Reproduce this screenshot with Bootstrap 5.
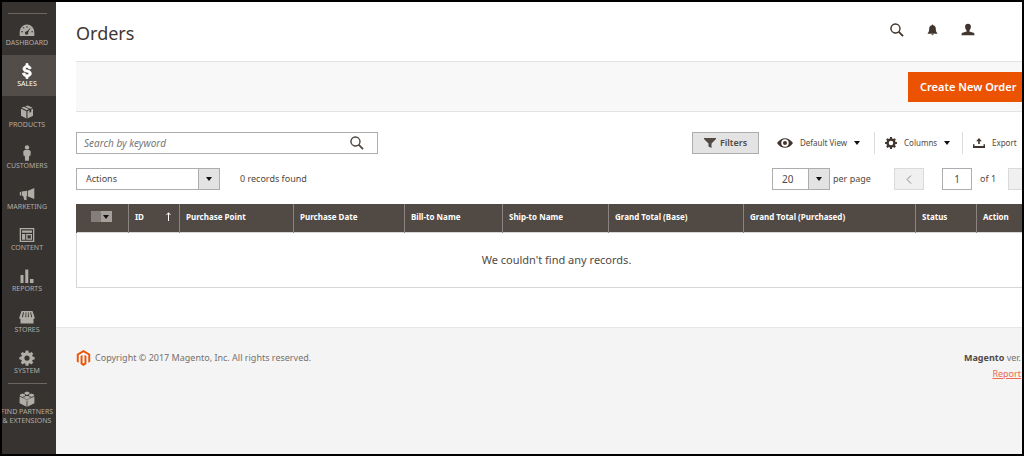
<!DOCTYPE html>
<html lang="en">
<head>
<meta charset="utf-8">
<meta name="viewport" content="width=device-width, initial-scale=1">
<title>Orders / Magento Admin</title>
<link href="https://cdn.jsdelivr.net/npm/bootstrap@5.3.0/dist/css/bootstrap.min.css" rel="stylesheet">
<style>
  body { font: 9px/16px "Noto Sans", "Open Sans", sans-serif; color: #514943; border: 2px solid #000; min-height: 100vh; overflow-x: hidden; }
  svg { display: block; fill: currentColor; flex: none; }
  button, input, select { font: inherit; color: inherit; border-radius: 0; }

  .side-menu { width: 54px; background: #373330; padding-top: 11px; flex: none; }
  .side-menu hr { margin: 0 9px 0 6px; border-color: #6d6661; opacity: 1; height: 1px; }
  .side-menu a { height: 41px; color: #b0aca6; font-size: 7px; line-height: 9px; text-decoration: none; white-space: nowrap; text-align: center; padding: 8px 4px 0 0; }
  .side-menu a svg { height: 16px; width: 16px; }
  .side-menu a.active { background: #524d49; color: #fff; }
  .side-menu a.partners { height: 70px; padding-top: 7px; }

  .content-col { min-width: 0; }
  .content-area { padding-left: 20px; }
  .page-head { height: 59px; padding-right: 47px; color: #41362f; }
  .page-head h1 { font-size: 18px; line-height: 24px; margin: 2px 0 0; }
  .head-icons { gap: 23px; margin-bottom: 4px; }
  .plain-btn { border: 0; background: none; padding: 0; }
  .action-bar { height: 51px; background: #f8f8f8; border: 1px solid #e3e3e3; border-width: 1px 0; }
  .btn-create { background: #eb5202; color: #fff; border: 0; width: 114px; height: 30px; font-size: 11px; font-weight: 600; padding: 0 6px 0 12px; white-space: nowrap; }

  .grid-tools { padding-top: 20px; }
  .search-box { width: 302px; height: 22px; border: 1px solid #adadad; padding: 0 13px 0 7px; }
  .search-box input { border: 0; outline: 0; padding: 0; background: none; min-width: 0; font-size: 10px; }
  .search-box input, .search-box input::placeholder { font-style: italic; color: #777; opacity: 1; }
  .btn-filters { width: 67px; height: 22px; background: #e3e3e3; border: 1px solid #adadad; font-weight: 600; padding: 0; }
  .tool { height: 22px; font-size: 8px; white-space: nowrap; padding-left: 10px; gap: 7px; }
  .tool svg { color: #41362f; }
  .tool + .tool { border-left: 1px solid #dcdcdc; }
  .tool-view { width: 115px; padding-left: 18px; }
  .tool-columns { width: 88px; }
  .tool-export { width: 60px; }
  .caret { width: 0; border: 3px solid transparent; border-top: 4px solid #111; border-bottom: 0; }

  .grid-row { padding-top: 14px; }
  .select-box { position: relative; height: 22px; }
  .select-box select { appearance: none; width: 100%; height: 100%; border: 1px solid #adadad; padding: 0 9px; background: linear-gradient(#adadad, #adadad) right 20px top / 1px 100% no-repeat, linear-gradient(#e3e3e3, #e3e3e3) right top / 20px 100% no-repeat #fff; }
  .select-box .caret { position: absolute; right: 8px; top: 9px; pointer-events: none; }
  .select-actions { width: 144px; }
  .select-size { width: 58px; }
  .size-label { width: 64px; padding-left: 3px; }
  .page-btn { height: 22px; width: 30px; border: 1px solid #dadada; background: #f0f0f0; color: #8a8580; padding: 0; }
  .page-btn.next { width: 14px; border-right: 0; }
  .page-field { width: 30px; height: 22px; border: 1px solid #adadad; text-align: center; padding: 0; margin-left: 18px; }
  .of-label { width: 36px; padding-left: 8px; }
  .select-size select, .page-field { font-size: 10px; }

  .orders { table-layout: fixed; width: 100%; margin: 14px 0 0; }
  .orders th { background: #514943; color: #fff; font-size: 8px; line-height: 12px; font-weight: 700; height: 28px; padding: 0 0 2px 6px; border-left: 1px solid #8a837f; white-space: nowrap; }
  .orders th:first-child { border-left-color: #514943; }
  .orders td { height: 55px; border: 1px solid #d6d6d6; border-right: 0; text-align: center; font-size: 11px; padding: 0 0 0 14px; }
  .mass-select { width: 21px; height: 11px; background: linear-gradient(90deg, #847d79 10px, #a5a09c 10px); border: 0; padding: 0 3px 0 0; }

  .page-foot { margin-top: 39px; background: #f4f4f4; border-top: 1px solid #e6e6e6; padding: 22px 1px 0 20px; color: #77716c; }
  .page-foot a { color: #ef6a4c; }
  .page-foot strong { color: #514943; font-weight: 700; }
</style>
</head>
<body class="d-flex">
<nav class="side-menu d-flex flex-column" aria-label="Main menu">
  <hr>
  <a href="#" class="d-flex flex-column align-items-center"><svg viewBox="0 0 16 16"><path fill-rule="evenodd" d="M8 2.500a7.300 7.300 0 0 0-7.300 7.300V14h14.600V9.800A7.300 7.300 0 0 0 8 2.500zM11.800 5.300 9.200 10.300a1.700 1.700 0 1 1-1.200-1zM2.200 9.200h1.800v1H2.200zM12.300 9.200h1.700v1h-1.700zM7.500 4h1v1.700h-1zM3.700 5.600l.7-.7 1.200 1.200-.7.7z"/></svg><span>DASHBOARD</span></a>
  <a href="#" class="active d-flex flex-column align-items-center"><svg viewBox="0 0 16 16"><path stroke="currentColor" stroke-width=".8" d="M7 .6h2v1.900c1.700.3 2.900 1.300 3.100 3L9.800 6C9.600 5 9 4.500 8 4.500S6.400 5 6.400 5.600c0 .8.800 1.100 2.200 1.500 2.300.6 3.700 1.500 3.700 3.500 0 1.700-1.200 2.800-3.300 3.100v1.800H7v-1.800c-2-.3-3.300-1.500-3.500-3.400L6 10c.2 1.200 1 1.800 2.100 1.800s1.800-.4 1.800-1.100c0-.8-.8-1.200-2.300-1.600C5.300 8.500 4 7.600 4 5.700c0-1.600 1.200-2.700 3-3z"/></svg><span>SALES</span></a>
  <a href="#" class="d-flex flex-column align-items-center"><svg viewBox="0 0 16 16"><path d="M7.600 1.500 2.500 3.800l5.300 2.400L10 5.100 4.900 2.700zM8.700 1.500l-2.500 1L11.300 4.700l2.300-1zM2 4.800l5.400 2.500v7.200L2 11.700zM14 4.800v6.900l-5.500 2.800V7.300l2-1v2.500l1.700-.8V5.600z"/></svg><span>PRODUCTS</span></a>
  <a href="#" class="d-flex flex-column align-items-center"><svg viewBox="0 0 16 16"><circle cx="8" cy="2.400" r="2.200"/><path d="M5.700 5h4.600l1.500 1.500-.3 4-1.300.4-.3 4.900H6.100l-.3-4.900-1.300-.4-.3-4z"/></svg><span>CUSTOMERS</span></a>
  <a href="#" class="d-flex flex-column align-items-center"><svg viewBox="0 0 16 16"><path d="M.8 6.300 2 5.800v4L.8 9.300zM2.700 5.600l5.500-.8v5.700l-1-.1.700 3.300-2.700.4-1-4-1.500-.3zM9 4.700 15.300 2v11L9 10.600z"/></svg><span>MARKETING</span></a>
  <a href="#" class="d-flex flex-column align-items-center"><svg viewBox="0 0 16 16"><path fill-rule="evenodd" d="M.7 1h14.600v14H.7zM2 2.300v11.400h12V2.300zM3 3.500h10v2.300H3zM3 7h3.200v5.700H3zM7.200 7H13v5.700H7.200zM8.500 8.200v3.200h3.300V8.200z"/></svg><span>CONTENT</span></a>
  <a href="#" class="d-flex flex-column align-items-center"><svg viewBox="0 0 16 16"><path d="M1.500 7h3v8h-3zM6.300 1.500h3V15h-3zM11 11h3.500v4H11z"/></svg><span>REPORTS</span></a>
  <a href="#" class="d-flex flex-column align-items-center"><svg viewBox="0 0 16 16"><path fill-rule="evenodd" d="M2.500 2h11L15.700 8.500c0 1-.7 1.500-1.200 1.500v4.500h-13V10C.8 10 .3 9.500.3 8.500zM4 3.200 2.900 8.300h1L5 3.200zM6.700 3.200 6.300 8.300h1V3.200zM8.900 3.200v5.100h1l-.4-5.100zM11.200 3.200l1 5.100h1L12 3.200z"/></svg><span>STORES</span></a>
  <a href="#" class="d-flex flex-column align-items-center"><svg viewBox="0 0 16 16"><path fill-rule="evenodd" d="M6.700.6h2.600l.4 2 1.100.5 1.700-1.200 1.800 1.800-1.200 1.700.5 1.100 2 .4v2.500l-2 .4-.5 1.100 1.200 1.700-1.800 1.800-1.700-1.200-1.100.5-.4 2H6.700l-.4-2-1.100-.5-1.700 1.200-1.800-1.800 1.200-1.700-.5-1.100-2-.4V6.900l2-.4.500-1.100-1.200-1.700 1.800-1.800 1.700 1.200 1.100-.5zM8 5.500a2.600 2.600 0 1 0 0 5.200 2.600 2.600 0 0 0 0-5.200z"/></svg><span>SYSTEM</span></a>
  <hr>
  <a href="#" class="partners d-flex flex-column align-items-center"><svg viewBox="0 0 16 16"><path d="M8 4.800 14.800 7.500 8 10.500 1.200 7.500z" opacity=".55"/><path d="M.6 5.500 7.600 9v6.700L.6 12.200zM15.400 5.500v6.700L8.400 15.700V9zM8 .4l2.500 1.100v1.300L8 4 5.500 2.800V1.500zM3.500 2.500 6 3.600v1.300L3.500 6 1 4.900V3.600zM12.500 2.500 15 3.600v1.300L12.500 6 10 4.900V3.600zM8 4.700l2.500 1.100v1.300L8 8.200 5.500 7.100V5.800z"/></svg><span>FIND PARTNERS<br>&amp; EXTENSIONS</span></a>
</nav>

<div class="content-col d-flex flex-column flex-grow-1">
  <div class="content-area">
    <header class="page-head d-flex align-items-center justify-content-between">
      <h1 class="fw-normal">Orders</h1>
      <div class="head-icons d-flex align-items-center">
        <button class="plain-btn" aria-label="Search"><svg width="14" height="14" viewBox="0 0 14 14"><path fill-rule="evenodd" d="M5.500.3a5.200 5.200 0 1 0 3 9.400l3.800 4 1.400-1.300-4-3.900A5.200 5.200 0 0 0 5.500.300zM5.500 1.700a3.800 3.800 0 1 1 0 7.600 3.800 3.800 0 0 1 0-7.600z"/></svg></button>
        <button class="plain-btn" aria-label="Notifications"><svg width="11" height="12" viewBox="0 0 12 12"><path d="M5.200.8a.8.800 0 0 1 1.600 0c2 .4 2.800 1.900 2.800 3.900 0 2.200.4 3.600 1.600 4.500v.8H.8v-.8C2 8.300 2.400 6.900 2.400 4.700c0-2 .8-3.500 2.800-3.900zM4.800 10.500h2.400c-.1.800-.5 1.300-1.200 1.300s-1.100-.5-1.200-1.300z"/></svg></button>
        <button class="plain-btn" aria-label="Account"><svg width="14" height="14" viewBox="0 0 14 14"><path d="M7 .8c1.900 0 2.900 1.200 2.900 3 0 1.500-.7 2.900-1.500 3.600V8.600l4 1.100c.8.300 1.100.7 1.100 2.600H.5c0-1.900.3-2.300 1.100-2.600L5.600 8.600V7.400C4.800 6.700 4.100 5.300 4.100 3.800c0-1.800 1-3 2.900-3z"/></svg></button>
      </div>
    </header>

    <div class="action-bar d-flex align-items-center justify-content-end"><button class="btn-create">Create New Order</button></div>

    <div class="grid-tools d-flex justify-content-between">
      <div class="search-box d-flex align-items-center">
        <input class="flex-grow-1" type="text" placeholder="Search by keyword" aria-label="Search by keyword">
        <button class="plain-btn" aria-label="Search"><svg width="14" height="14" viewBox="0 0 14 14"><path fill-rule="evenodd" d="M5.500.3a5.200 5.200 0 1 0 3 9.400l3.800 4 1.400-1.300-4-3.900A5.200 5.200 0 0 0 5.500.300zM5.500 1.700a3.800 3.800 0 1 1 0 7.600 3.800 3.800 0 0 1 0-7.600z"/></svg></button>
      </div>
      <div class="d-flex">
        <button class="btn-filters d-flex align-items-center justify-content-center"><svg class="me-1" width="12" height="10" viewBox="0 0 12 10"><path d="M0 0h12v1L7.500 5.500V10l-3-1.500v-3L0 1z"/></svg>Filters</button>
        <button class="plain-btn tool tool-view d-flex align-items-center"><svg width="16" height="10" viewBox="0 0 16 10"><path fill-rule="evenodd" d="M0 5C2.300 1.700 5 .2 8 .2S13.700 1.700 16 5C13.700 8.300 11 9.800 8 9.800S2.300 8.300 0 5zM8 1.300a3.700 3.700 0 1 0 0 7.400 3.700 3.700 0 0 0 0-7.400z"/><circle cx="8" cy="5" r="2"/></svg><span>Default View</span><span class="caret"></span></button>
        <button class="plain-btn tool tool-columns d-flex align-items-center"><svg width="12" height="12" viewBox="0 0 16 16"><path fill-rule="evenodd" d="M6.700.1h2.600l.4 2.200 1.100.5 1.900-1.300 1.800 1.800-1.300 1.900.5 1.100 2.200.4v2.600l-2.200.4-.5 1.100 1.300 1.900-1.800 1.800-1.900-1.300-1.100.5-.4 2.200H6.700l-.4-2.200-1.100-.5-1.900 1.300-1.800-1.800 1.300-1.900-.5-1.100-2.200-.4V6.700l2.200-.4.500-1.100-1.300-1.900 1.800-1.800 1.900 1.300 1.100-.5zM8 5a3 3 0 1 0 0 6 3 3 0 0 0 0-6z"/></svg><span>Columns</span><span class="caret"></span></button>
        <button class="plain-btn tool tool-export d-flex align-items-center"><svg width="12" height="10" viewBox="0 0 12 10"><path d="M6 0l2.800 3.200H6.800V6H5.200V3.200h-2zM0 6.200h1.500V8h9V6.200H12V10H0z"/></svg><span>Export</span></button>
      </div>
    </div>

    <div class="grid-row d-flex align-items-center">
      <div class="select-box select-actions"><select aria-label="Actions"><option>Actions</option></select><span class="caret"></span></div>
      <span class="ms-3 ps-1">0 records found</span>
      <div class="d-flex align-items-center ms-auto">
        <div class="select-box select-size"><select id="per-page"><option>20</option></select><span class="caret"></span></div>
        <label for="per-page" class="size-label text-nowrap">per page</label>
        <button class="page-btn d-flex align-items-center justify-content-center" disabled aria-label="Previous page"><svg width="6" height="9" viewBox="0 0 6 9"><path d="M5 .5 1 4.500l4 4" fill="none" stroke="currentColor"/></svg></button>
        <input id="page-no" class="page-field" type="text" value="1">
        <label for="page-no" class="of-label text-nowrap">of 1</label>
        <button class="page-btn next" disabled aria-label="Next page"></button>
      </div>
    </div>

    <table class="orders">
      <colgroup><col style="width:52px"><col style="width:51px"><col style="width:114px"><col style="width:111px"><col style="width:98px"><col style="width:106px"><col style="width:135px"><col style="width:172px"><col style="width:61px"><col></colgroup>
      <thead><tr>
        <th><button class="mass-select d-flex align-items-center justify-content-end ms-auto me-3" aria-label="Select rows"><span class="caret"></span></button></th>
        <th><div class="d-flex justify-content-between align-items-center pe-1">ID<svg class="me-1" width="5" height="9" viewBox="0 0 5 9"><path d="M2.500 9V.8M.5 3l2-2.200 2 2.200" fill="none" stroke="currentColor"/></svg></div></th>
        <th>Purchase Point</th><th>Purchase Date</th><th>Bill-to Name</th><th>Ship-to Name</th><th>Grand Total (Base)</th><th>Grand Total (Purchased)</th><th>Status</th><th>Action</th>
      </tr></thead>
      <tbody><tr><td colspan="10">We couldn't find any records.</td></tr></tbody>
    </table>
  </div>

  <footer class="page-foot flex-grow-1 d-flex justify-content-between">
    <div class="d-flex align-items-center align-self-start"><svg class="me-1" width="15" height="16" viewBox="0 0 15 16"><path fill="#eb5202" d="M7.500 0 14.200 3.900v7.800l-1.900 1.100V5L7.500 2.200 2.700 5v7.800L.8 11.700V3.900zM4.600 6.100l1.900-1.100v8l1 .6 1-.6V5l1.900 1.100v8L7.500 15.900 4.600 14.100z"/></svg>Copyright © 2017 Magento, Inc. All rights reserved.</div>
    <div class="text-end"><strong>Magento</strong> ver.<br><a href="#">Report</a></div>
  </footer>
</div>
<script src="https://cdn.jsdelivr.net/npm/bootstrap@5.3.0/dist/js/bootstrap.bundle.min.js"></script>
</body>
</html>
